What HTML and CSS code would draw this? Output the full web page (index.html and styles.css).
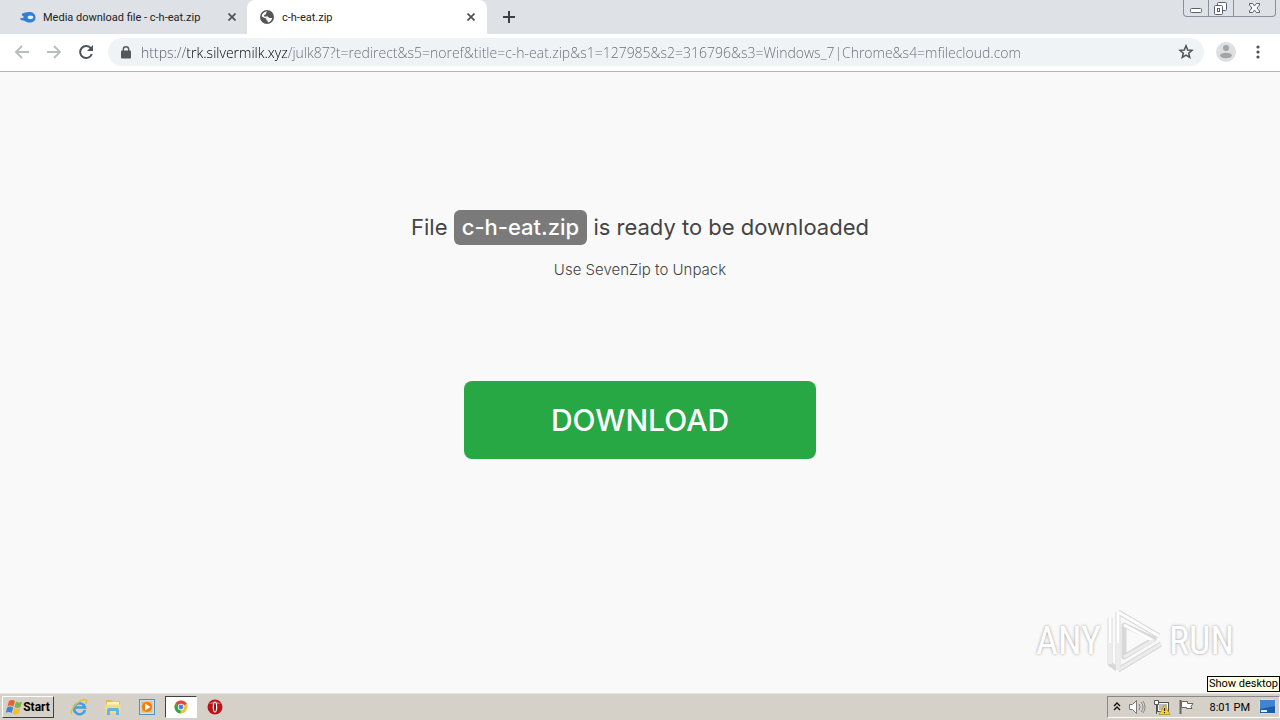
FILE: index.html
```html
<!DOCTYPE html>
<html lang="en">
<head>
    <meta charset="UTF-8" />
    <title>c-h-eat.zip</title>
    <link rel="stylesheet" href="styles.css">
</head>
<body>
<header class="tab-strip">
    <div class="tab">
        <svg class="favicon" viewBox="0 0 16 16"><path d="M2 4.500C5 4 6 3 9 3c4 0 6.500 2 6.500 5.500S13 13.500 9.500 13.500C6 13.500 5 11.500 3 11.500 1 11.500 0 10.500 0 9.300c2 .2 3-.3 4-1.300C3 6.500 1.500 7 2 4.500z" fill="#2f7fd6"/><ellipse cx="10.500" cy="8.300" rx="2.800" ry="1.900" fill="#e4effa"/></svg>
        <span class="tab-title">Media download file - c-h-eat.zip</span>
        <button class="tab-close" aria-label="Close tab"><svg width="8" height="8" viewBox="0 0 8 8"><path d="M.5.5l7 7M7.500.5l-7 7" stroke="#4d5156" stroke-width="1.700"/></svg></button>
    </div>
    <div class="tab active">
        <svg class="favicon" viewBox="0 0 16 16"><circle cx="8" cy="8" r="7" fill="#55585b"/><path d="M8.500 2.600L6.800 4l.4 1.300-1.900.5-.3 1.700h3.800l1.400 1.500h2.900a5.500 5.500 0 0 1-4.600 4.500l.4-1.600-1.500-.8V9.500L5 8.800 2.600 7.200A5.500 5.500 0 0 1 8.500 2.600z" fill="#fff"/></svg>
        <span class="tab-title">c-h-eat.zip</span>
        <button class="tab-close" aria-label="Close tab"><svg width="8" height="8" viewBox="0 0 8 8"><path d="M.5.5l7 7M7.500.5l-7 7" stroke="#4d5156" stroke-width="1.700"/></svg></button>
    </div>
    <button class="new-tab" aria-label="New tab"><svg width="12" height="12" viewBox="0 0 12 12"><path d="M6 0v12M0 6h12" stroke="#3c4043" stroke-width="2"/></svg></button>
    <div class="window-controls">
        <button aria-label="Minimize"><svg width="24" height="16" viewBox="0 0 24 16"><rect x="6.500" y="8.500" width="11" height="4" rx="1" fill="#fff" stroke="#5a6070"/></svg></button>
        <button aria-label="Restore"><svg width="24" height="16" viewBox="0 0 24 16"><g fill="#fff" stroke="#5a6070"><rect x="8.500" y="2.500" width="9" height="8" rx="1"/><rect x="5.500" y="5.500" width="8" height="9" rx="1"/><rect x="8.500" y="8.500" width="2" height="3"/></g></svg></button>
        <button class="close" aria-label="Close"><svg width="41" height="16" viewBox="0 0 41 16"><path d="M15.500 3.500h3l2 2.500 2-2.500h3v1.500L23 8l2.500 3v1.500h-3l-2-2.500-2 2.500h-3V11L18 8l-2.500-3z" fill="#fff" stroke="#5a6070"/></svg></button>
    </div>
</header>

<nav class="toolbar">
    <button aria-label="Back"><svg width="16" height="16" viewBox="0 0 16 16"><path d="M15 8H2M8 2L2 8l6 6" fill="none" stroke="#b9bbbd" stroke-width="1.800"/></svg></button>
    <button aria-label="Forward"><svg width="16" height="16" viewBox="0 0 16 16"><path d="M1 8h13M8 2l6 6-6 6" fill="none" stroke="#b9bbbd" stroke-width="1.800"/></svg></button>
    <button aria-label="Reload"><svg width="16" height="16" viewBox="0 0 16 16"><path d="M13 4.500A6 6 0 1 0 13.800 10" fill="none" stroke="#505356" stroke-width="2"/><path d="M15 1v6H9z" fill="#505356"/></svg></button>
    <div class="address">
        <svg class="lock" width="10" height="13" viewBox="0 0 10 13"><rect y="4.500" width="10" height="8" rx="1" fill="#55585b"/><path d="M2.300 5V3.500a2.700 2.700 0 0 1 5.400 0V5" fill="none" stroke="#55585b" stroke-width="1.400"/></svg>
        <input type="text" class="url" aria-label="Address" value="https://trk.silvermilk.xyz/julk87?t=redirect&amp;s5=noref&amp;title=c-h-eat.zip&amp;s1=127985&amp;s2=316796&amp;s3=Windows_7|Chrome&amp;s4=mfilecloud.com">
        <button class="star" aria-label="Bookmark this page"><svg width="16" height="16" viewBox="0 0 16 16"><path d="M8 1.800l1.700 4.200 4.300.3-3.300 2.900 1 4.300L8 11.200l-3.700 2.300 1-4.300L2 6.300l4.300-.3z" fill="none" stroke="#505356" stroke-width="1.500"/></svg></button>
    </div>
    <button class="profile" aria-label="Profile"><svg width="20" height="20" viewBox="0 0 20 20"><circle cx="10" cy="10" r="10" fill="#dedfe0"/><circle cx="10" cy="6" r="3" fill="#a2a4a6"/><ellipse cx="10" cy="13.500" rx="6" ry="2.800" fill="#a2a4a6"/></svg></button>
    <button class="more" aria-label="Menu"><svg width="4" height="14" viewBox="0 0 4 14"><g fill="#505356"><circle cx="2" cy="2" r="1.600"/><circle cx="2" cy="7" r="1.600"/><circle cx="2" cy="12" r="1.600"/></g></svg></button>
</nav>

<main class="page">
    <h1>File <span class="filename">c-h-eat.zip</span> is ready to be downloaded</h1>
    <p class="hint">Use SevenZip to Unpack</p>
    <button class="download">DOWNLOAD</button>

    <div class="watermark">
        <span>ANY</span>
        <svg width="58" height="64" viewBox="0 0 58 64"><g fill="none" stroke-linejoin="round"><path d="M12 3v58M12 3l41 24M12 61l43-26M4 9v46l7 5M18 16v32l30-18z" stroke="#d8d8d8" stroke-width="5"/><path d="M12 3v58M12 3l41 24M4 9v46M18 16l30 16" stroke="#fff" stroke-width="3"/><path d="M12 61l43-26M18 48l30-17M12 34v27M4 34v21" stroke="#ececec" stroke-width="3"/></g></svg>
        <span>RUN</span>
    </div>
</main>

<footer class="taskbar">
    <button class="start"><svg width="17" height="16" viewBox="0 0 17 16"><path d="M3 2q3-2 6 0L7.500 7.500q-3-2-6 0z" fill="#e8622c"/><path d="M10 2.500q3 2 6 0L14.500 8q-3 2-6 0z" fill="#7ab648"/><path d="M1.200 8.500q3-2 6 0L5.700 14q-3-2-6 0z" fill="#3a86d0"/><path d="M8.200 9q3 2 6 0l-1.500 5.500q-3 2-6 0z" fill="#f6bd2c"/></svg>Start</button>
    <div class="launchers">
        <button aria-label="Internet Explorer"><svg width="18" height="18" viewBox="0 0 18 18"><path d="M15 12A5.500 5.500 0 1 1 15 9.500H5" fill="none" stroke="#3fa1e3" stroke-width="2.600"/><path d="M2 16C-1 13 8 2 15 1.500c3 0 1.500 3 .5 4.500" fill="none" stroke="#e5bd40" stroke-width="1.500"/></svg></button>
        <button aria-label="Explorer"><svg width="18" height="18" viewBox="0 0 18 18"><path d="M2 2h5l1 1.500h8V15H2z" fill="#e0ba4c"/><path d="M3 4h12v4H3z" fill="#fff3bc"/><path d="M1.500 6.500h15V15h-15z" fill="#f4dc83"/><path d="M3 17v-5q0-2 2-2h8q2 0 2 2v5h-3v-4H6v4z" fill="#62b5df"/></svg></button>
        <button aria-label="Media Player"><svg width="18" height="18" viewBox="0 0 18 18"><rect x="1.500" y="1.500" width="15" height="15" fill="#c5dff3" stroke="#4c91c9"/><rect x="3.500" y="3.500" width="11" height="11" fill="#f9b45c"/><circle cx="9" cy="9" r="5" fill="#ee7d12"/><path d="M7 5.500l5.500 3.500L7 12.500z" fill="#fff"/></svg></button>
        <button class="running" aria-label="Chrome"><svg width="14" height="14" viewBox="0 0 14 14"><circle cx="7" cy="7" r="6.500" fill="#f4c430"/><path d="M7 7L1.400 3.700A6.500 6.500 0 0 1 12.600 3.700z" fill="#de4a3d"/><path d="M7 7L1.400 3.700A6.500 6.500 0 0 0 6.500 13.500z" fill="#35a353"/><path d="M7 3.700h5.600" stroke="#de4a3d"/><circle cx="7" cy="7" r="3.200" fill="#fff"/><circle cx="7" cy="7" r="2.400" fill="#4285e8"/></svg></button>
        <button aria-label="Opera"><svg width="16" height="16" viewBox="0 0 16 16"><circle cx="8" cy="8" r="7.500" fill="#b9141c"/><path d="M2 5a7 5 0 0 1 12 0" fill="#d8575a"/><ellipse cx="8" cy="8" rx="2.300" ry="5.500" fill="#fff"/><ellipse cx="8" cy="8" rx="1" ry="4.500" fill="#8c1015"/></svg></button>
    </div>
    <div class="tray">
        <svg width="8" height="10" viewBox="0 0 8 10"><path d="M1 4l3-3 3 3M1 8l3-3 3 3" fill="none" stroke="#111" stroke-width="1.400"/></svg>
        <svg width="18" height="16" viewBox="0 0 18 16"><path d="M1.500 5.500h3l4-4v13l-4-4h-3z" fill="#fff" stroke="#777"/><path d="M11 5q2 3 0 6M13 3q4 5 0 10M15 2q4 6 0 12" fill="none" stroke="#888"/></svg>
        <svg width="18" height="16" viewBox="0 0 18 16"><rect x="4.500" y="3.500" width="11" height="9" fill="#f6f6f6" stroke="#555"/><rect x="6" y="5" width="8" height="6" fill="#bbb"/><path d="M1.500 1.500h4v4h-4zM3.500 6v9" fill="#fff" stroke="#555"/><path d="M11.500 6l5.500 9.500H6z" fill="#f9d62e" stroke="#a78719" stroke-width=".7"/><path d="M11.500 9v3M11.500 13v1.200" stroke="#222" stroke-width="1.200"/></svg>
        <svg width="17" height="16" viewBox="0 0 17 16"><path d="M2.500 1v14" stroke="#666" stroke-width="2"/><path d="M3.500 2.500h6v2h5.500l-2 3 1 2H8.500v-1h-5z" fill="#fff" stroke="#666"/></svg>
        <time class="clock">8:01 PM</time>
        <button class="desktop" aria-label="Show desktop"><svg width="18" height="18" viewBox="0 0 18 18"><rect x=".5" y="1.500" width="16" height="14" rx="1" fill="#1c5da8" stroke="#d5dfe8"/><path d="M1 2h15v6L1 11z" fill="#3f86cf"/><rect x="2" y="12" width="6" height="2" fill="#e5eef6"/></svg></button>
    </div>
    <div class="tooltip">Show desktop</div>
</footer>
</body>
</html>
```
FILE: styles.css
```css
* {
    box-sizing: border-box;
}

body {
    margin: 0;
    min-height: 100vh;
    display: flex;
    flex-direction: column;
    font-family: Roboto, sans-serif;
    font-size: 11px;
    background-color: #f9f9f9;
    color: #222;
    overflow: hidden;
}

button {
    display: flex;
    align-items: center;
    justify-content: center;
    padding: 0;
    border: none;
    background: none;
    font-family: inherit;
}

.tab-strip {
    display: flex;
    height: 34px;
    background-color: #dee1e6;
}

.tab {
    display: flex;
    align-items: center;
    width: 240px;
    padding: 0 12px;
    gap: 7px;
    border-radius: 8px 8px 0 0;
}

.tab:first-child {
    width: 247px;
    padding: 0 11px 0 20px;
}

.tab.active {
    background-color: #fff;
}

.favicon {
    width: 16px;
    height: 16px;
}

.tab-title {
    flex: 1;
    white-space: nowrap;
}

.tab-close {
    width: 8px;
    height: 16px;
}

.new-tab {
    width: 44px;
}

.window-controls {
    display: flex;
    height: 17px;
    margin-left: auto;
    margin-right: 4px;
    border: 1px solid #8a8f9b;
    border-top: none;
    border-radius: 0 0 4px 4px;
}

.window-controls button + button {
    border-left: 1px solid #8a8f9b;
}

.toolbar {
    display: flex;
    align-items: center;
    height: 38px;
    padding: 0 20px 1px 14px;
    gap: 16px;
    background-color: #fff;
    border-bottom: 1px solid #b3b3b3;
}

.address {
    flex: 1;
    display: flex;
    align-items: center;
    height: 28px;
    margin: 0 -4px 0 -2px;
    padding: 0 10px 0 13px;
    gap: 10px;
    border-radius: 14px;
    background-color: #f0f3f5;
}

/* The host part of the address is darker than the rest */
.url {
    flex: 1;
    height: 24px;
    padding: 0;
    border: none;
    outline: none;
    font-family: "Open Sans", sans-serif;
    font-size: 14px;
    font-weight: 300;
    color: transparent;
    background: linear-gradient(to right, #555a60 46px, #000 46px, #000 147px, #666b70 147px);
    -webkit-background-clip: text;
    background-clip: text;
}

.profile {
    margin-right: 4px;
}

.page {
    position: relative;
    flex: 1;
    display: flex;
    flex-direction: column;
    align-items: center;
    padding-top: 138px;
    font-family: Inter, sans-serif;
    color: #444;
}

h1 {
    margin: 0;
    font-size: 22px;
    line-height: 35px;
    font-weight: 400;
}

.filename {
    display: inline-block;
    padding: 0 8px;
    border-radius: 6px;
    background-color: #7a7a7a;
    color: #fff;
    font-weight: 500;
}

.hint {
    margin: 14px 0 100px;
    font-size: 15px;
    line-height: 22px;
    font-weight: 300;
}

.download {
    width: 352px;
    height: 78px;
    border-radius: 8px;
    background-color: #28a745;
    color: #fff;
    font-size: 30px;
    font-weight: 500;
}

.watermark {
    position: absolute;
    right: 46px;
    bottom: 20px;
    display: flex;
    align-items: center;
    gap: 5px;
    font-family: "Roboto Condensed", "Liberation Sans Narrow", "Liberation Sans", sans-serif;
    font-size: 38px;
    color: #fff;
    text-shadow: 0 0 3px #999;
}

.taskbar {
    position: relative;
    display: flex;
    align-items: center;
    height: 27px;
    background-color: #d5d1c9;
    border-top: 1px solid #e8e6e2;
    color: #000;
}

.start {
    width: 52px;
    height: 22px;
    margin-left: 2px;
    border: 1px solid;
    border-color: #fff #404040 #404040 #fff;
    font-size: 12px;
    font-weight: 700;
}

.launchers {
    display: flex;
    align-items: center;
    margin-left: 9px;
    gap: 2px;
}

.launchers button {
    width: 32px;
    height: 22px;
}

.launchers .running {
    background-color: #fff;
    border: 1px solid;
    border-color: #404040 #fff #fff #404040;
}

.tray {
    display: flex;
    align-items: center;
    height: 22px;
    margin-left: auto;
    padding: 0 2px 0 5px;
    gap: 7px;
    border: 1px solid;
    border-color: #888 #fff #fff #888;
}

.clock {
    margin: 0 2px 0 8px;
}

.tooltip {
    position: absolute;
    right: 0;
    bottom: 28px;
    padding: 0 1px;
    border: 1px solid #000;
    background-color: #ffffe1;
    line-height: 14px;
}
```
